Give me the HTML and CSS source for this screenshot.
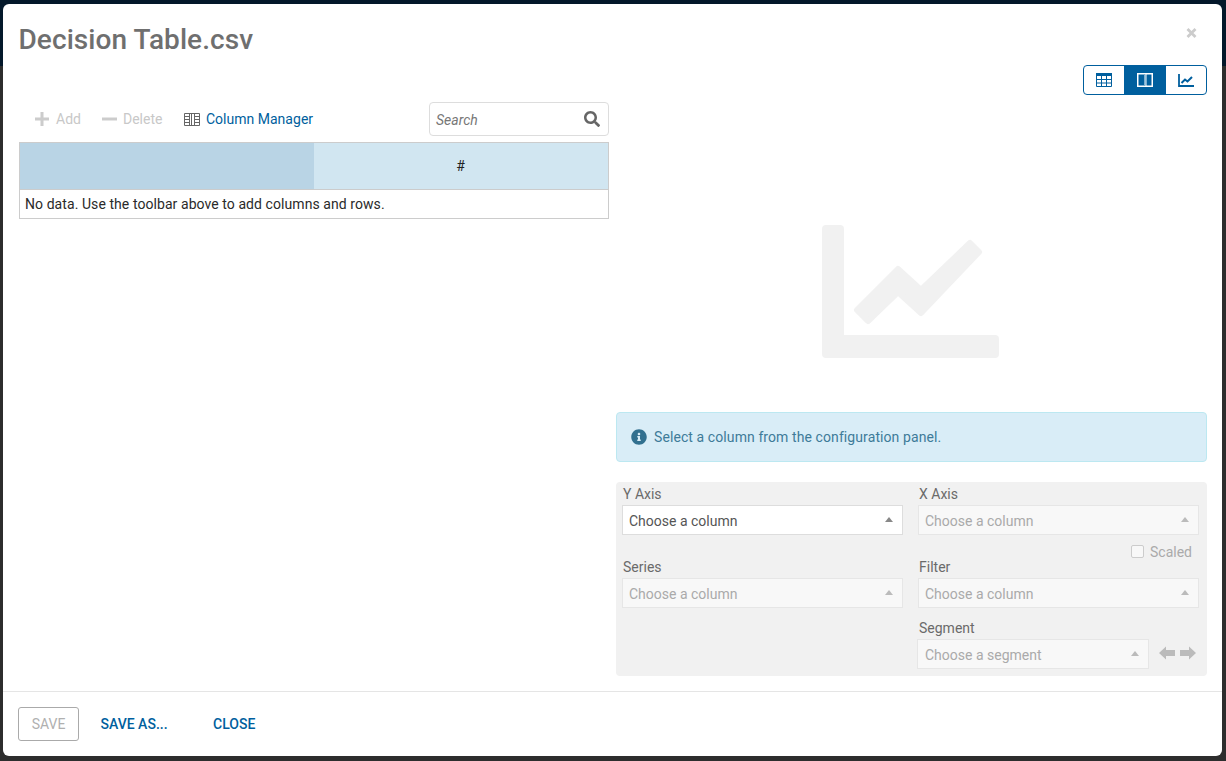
FILE: index.html
```html
<!DOCTYPE html>
<html lang="en">
<head>
<meta charset="utf-8">
<title>Decision Table.csv</title>
<link rel="stylesheet" href="styles.css">
</head>
<body>
<div class="modal">
  <header class="modal-header">
    <h1 class="modal-title">Decision Table.csv</h1>
    <button class="close-btn" aria-label="Close">
      <svg viewBox="0 0 11 10" width="11" height="10"><path d="M1.500 1l8 8M9.500 1l-8 8" stroke="#ccc" stroke-width="2.800"/></svg>
    </button>
  </header>
  <div class="view-row">
    <div class="view-toggle">
      <button class="view-btn">
        <svg viewBox="0 0 16 14" width="16" height="14"><path d="M.5.5h15v13H.5z" fill="none" stroke="#005f9e"/><path d="M0 0h16v3H0z" fill="#005f9e"/><path d="M0 6.500h16M0 10h16M5.500 0v14M10.500 0v14" stroke="#005f9e"/></svg>
      </button>
      <button class="view-btn active">
        <svg viewBox="0 0 16 14" width="16" height="14"><path d="M.75.75h14.500v12.500H.75z" fill="none" stroke="#fff" stroke-width="1.500"/><path d="M7 1h1.500v12H7z" fill="#7fb0cf"/><path d="M8.500 1h1v12h-1z" fill="#fff"/></svg>
      </button>
      <button class="view-btn">
        <svg viewBox="0 0 16 13" width="16" height="13"><path d="M1 0v12h15" fill="none" stroke="#005f9e" stroke-width="1.800"/><path d="M3.500 9L7 5.500l2.500 2L14 3" fill="none" stroke="#005f9e" stroke-width="2"/></svg>
      </button>
    </div>
  </div>
  <main class="modal-body">
    <section class="col-left">
      <div class="toolbar">
        <span class="tool disabled">
          <svg viewBox="0 0 14 14" width="14" height="14"><path d="M5.500 0h3v5.500H14v3H8.500V14h-3V8.500H0v-3h5.500z" fill="#ccc"/></svg>
          Add
        </span>
        <span class="tool disabled tool-delete">
          <svg viewBox="0 0 15 14" width="15" height="14"><path d="M0 5.500h15v3H0z" fill="#ccc"/></svg>
          Delete
        </span>
        <span class="tool link">
          <svg viewBox="0 0 16 13" width="16" height="13"><path d="M.5.5h15v12H.5z" fill="none" stroke="#666"/><path d="M0 3.500h5M0 6.500h5M0 9.500h5M11 3.500h5M11 6.500h5M11 9.500h5" stroke="#666"/><path d="M5.500 0v13M10.500 0v13M7.500 1v11" stroke="#666"/></svg>
          Column Manager
        </span>
        <label class="search">
          <span class="search-text">Search</span>
          <svg viewBox="0 0 512 512" width="16" height="16"><path fill="#666" d="M505 442.700L405.300 343c-4.500-4.500-10.600-7-17-7H372c27.600-35.300 44-79.700 44-128C416 93.100 322.900 0 208 0S0 93.100 0 208s93.100 208 208 208c48.300 0 92.700-16.400 128-44v16.300c0 6.400 2.500 12.500 7 17l99.700 99.700c9.400 9.400 24.600 9.400 33.900 0l28.300-28.300c9.400-9.400 9.400-24.600.1-34zM208 336c-70.700 0-128-57.200-128-128 0-70.700 57.200-128 128-128 70.700 0 128 57.200 128 128 0 70.700-57.200 128-128 128z"/></svg>
        </label>
      </div>
      <div class="table">
        <div class="table-head">
          <div class="head-cell head-select"></div>
          <div class="head-cell head-hash">#</div>
        </div>
        <div class="table-empty">No data. Use the toolbar above to add columns and rows.</div>
      </div>
    </section>
    <section class="col-right">
      <div class="placeholder">
        <svg viewBox="0 0 177 133" width="177" height="133">
          <path fill="#f1f1f1" d="M4 0h14a4 4 0 0 1 4 4v106h151a4 4 0 0 1 4 4v15a4 4 0 0 1-4 4H4a4 4 0 0 1-4-4V4a4 4 0 0 1 4-4z"/>
          <path fill="#f1f1f1" stroke="#f1f1f1" stroke-width="6" stroke-linejoin="round" d="M35 85l41-41 23 21 49-47 9 9-58 61-23-21-30 29z"/>
        </svg>
      </div>
      <div class="alert">
        <svg viewBox="0 0 512 512" width="16" height="16"><path fill="#31708f" d="M256 8C119 8 8 119 8 256s111 248 248 248 248-111 248-248S393 8 256 8zm0 110c23.200 0 42 18.800 42 42s-18.800 42-42 42-42-18.800-42-42 18.800-42 42-42zm56 254c0 6.600-5.400 12-12 12h-88c-6.600 0-12-5.400-12-12v-24c0-6.600 5.400-12 12-12h12v-64h-12c-6.600 0-12-5.400-12-12v-24c0-6.600 5.400-12 12-12h64c6.600 0 12 5.400 12 12v100h12c6.600 0 12 5.400 12 12v24z"/></svg>
        <span class="alert-text">Select a column from the configuration panel.</span>
      </div>
      <div class="config">
        <div class="config-col">
          <div class="field">
            <div class="field-label">Y Axis</div>
            <div class="select"><span>Choose a column</span><i class="caret"></i></div>
          </div>
          <div class="field field-series">
            <div class="field-label">Series</div>
            <div class="select off"><span>Choose a column</span><i class="caret"></i></div>
          </div>
        </div>
        <div class="config-col">
          <div class="field">
            <div class="field-label">X Axis</div>
            <div class="select off"><span>Choose a column</span><i class="caret"></i></div>
          </div>
          <div class="scaled"><i class="checkbox"></i>Scaled</div>
          <div class="field">
            <div class="field-label">Filter</div>
            <div class="select off"><span>Choose a column</span><i class="caret"></i></div>
          </div>
          <div class="field field-segment">
            <div class="field-label">Segment</div>
            <div class="segment-row">
              <div class="select off"><span>Choose a segment</span><i class="caret"></i></div>
              <div class="arrows">
                <svg viewBox="0 0 16 14" width="16" height="14"><path fill="#bbb" d="M0 7l7-6.500V4h9v6H7v3.500z"/></svg>
                <svg viewBox="0 0 16 14" width="16" height="14"><path fill="#bbb" d="M16 7L9 .5V4H0v6h9v3.500z"/></svg>
              </div>
            </div>
          </div>
        </div>
      </div>
    </section>
  </main>
  <footer class="modal-footer">
    <button class="btn btn-save">SAVE</button>
    <button class="btn btn-link btn-saveas">SAVE AS...</button>
    <button class="btn btn-link">CLOSE</button>
  </footer>
</div>
</body>
</html>
```

FILE: styles.css
```css
* { box-sizing: border-box; }
html, body { margin: 0; height: 100%; }
body {
  width: 1226px;
  height: 761px;
  overflow: hidden;
  background: linear-gradient(#03182a 0, #03182a 66px, #2d2d2d 66px);
  font-family: Roboto, "Liberation Sans", sans-serif;
  font-size: 14px;
  color: #333;
  padding: 4px 4px 5px 3px;
}
button { font: inherit; background: none; border: 0; padding: 0; cursor: pointer; }

.modal {
  width: 1219px;
  height: 752px;
  background: #fff;
  border-radius: 6px;
  display: flex;
  flex-direction: column;
}

.modal-header {
  height: 61px;
  padding: 0 16px 0 15.500px;
  display: flex;
  justify-content: space-between;
  align-items: flex-start;
}
.modal-title {
  margin: 19px 0 0;
  font-size: 28px;
  line-height: 34px;
  font-weight: 500;
  letter-spacing: .08px;
  color: #6f6f6f;
}
.close-btn { display: flex; margin: 24px 0 0; padding-right: 9px; }

.view-row {
  display: flex;
  justify-content: flex-end;
  padding-right: 15px;
  margin-bottom: 7px;
}
.view-toggle {
  display: grid;
  grid-template-columns: 40px 42px 40px;
  width: 124px;
  height: 30px;
  border: 1px solid #005f9e;
  border-radius: 4px;
  overflow: hidden;
}
.view-btn {
  display: flex;
  align-items: center;
  justify-content: center;
}
.view-btn.active { background: #005f9e; }

.modal-body {
  flex: 1;
  display: grid;
  grid-template-columns: 590px 591px;
  column-gap: 7px;
  padding: 0 15px 15px 16px;
}

.toolbar {
  height: 34px;
  display: flex;
  align-items: center;
  margin-bottom: 6px;
  padding-left: 16px;
}
.tool { display: flex; align-items: center; gap: 7px; margin-right: 21px; }
.tool.disabled { color: #c8c8c8; }
.tool-delete { gap: 6px; margin-right: 21.500px; }
.tool.link { color: #005f9e; gap: 6px; letter-spacing: .02px; }
.search {
  margin-left: auto;
  width: 180px;
  height: 34px;
  border: 1px solid #ddd;
  border-radius: 4px;
  display: flex;
  align-items: center;
  justify-content: space-between;
  padding: 0 8px 0 6px;
}
.search-text { font-style: italic; color: #777; padding-top: 2px; }

.table { border: 1px solid #ccc; }
.table-head {
  display: grid;
  grid-template-columns: 294px 1fr;
  height: 47px;
  background: #d1e6f1;
  border-bottom: 1px solid #ccc;
}
.head-cell {
  display: flex;
  align-items: center;
  justify-content: center;
  font-size: 14px;
  color: #222;
}
.head-hash { padding-right: 1px; }
.head-select { background: #b9d4e5; }
.table-empty {
  height: 28px;
  line-height: 28px;
  padding-left: 5px;
  color: #2a2a2a;
  letter-spacing: .07px;
}

.col-right { display: flex; flex-direction: column; }
.placeholder {
  height: 310px;
  display: flex;
  align-items: flex-start;
  justify-content: center;
  padding: 123px 2px 0 0;
}
.alert {
  height: 50px;
  margin-bottom: 20px;
  padding-left: 14px;
  display: flex;
  align-items: center;
  gap: 7px;
  background: #d9edf7;
  border: 1px solid #bce8f1;
  border-radius: 4px;
  color: #3e7b99;
}
.alert-text { letter-spacing: .09px; }

.config {
  height: 194px;
  background: #f1f1f1;
  border-radius: 4px;
  padding: 1px 8px 0 6px;
  display: grid;
  grid-template-columns: 281px 281px;
  column-gap: 15px;
}
.field-label { height: 22px; line-height: 22px; color: #6a6a6a; padding-left: 1px; }
.field-series { margin-top: 21px; }
.field-segment { margin-top: 9px; }
.select {
  height: 30px;
  padding: 2px 6px 0;
  display: flex;
  align-items: center;
  justify-content: space-between;
  background: #fff;
  border: 1px solid #ddd;
  color: #555;
}
.select.off { background: #f8f8f8; border-color: #e6e6e6; color: #aaa; }
.caret {
  width: 0;
  height: 0;
  margin-right: 3px;
  border-left: 4px solid transparent;
  border-right: 4px solid transparent;
  border-bottom: 5px solid #888;
  transform: translateY(-2px);
}
.select.off .caret { border-bottom-color: #bbb; }
.scaled {
  height: 21px;
  padding: 8px 7px 0 0;
  display: flex;
  justify-content: flex-end;
  align-items: flex-start;
  gap: 6px;
  color: #aaa;
  line-height: 18px;
}
.checkbox {
  width: 13px;
  height: 13px;
  margin-top: 2px;
  border: 1px solid #ccc;
  border-radius: 2px;
  background: #f8f8f8;
}
.segment-row { display: flex; margin-left: -1px; align-items: center; }
.segment-row .select { width: 232px; padding-left: 7px; }
.arrows { display: flex; gap: 5px; margin-left: 10px; margin-top: -2px; }

.modal-footer {
  height: 65px;
  border-top: 1px solid #e5e5e5;
  padding: 15px 0 0 15px;
  display: flex;
  align-items: flex-start;
}
.btn { height: 34px; font-weight: 500; }
.btn-save {
  width: 61px;
  border: 1px solid #aaa;
  border-radius: 3px;
  color: #b0b0b0;
  background: #fff;
  font-weight: 400;
}
.btn-link { color: #005f9e; }
.btn-saveas { margin: 0 45.500px 0 21.500px; }
```
